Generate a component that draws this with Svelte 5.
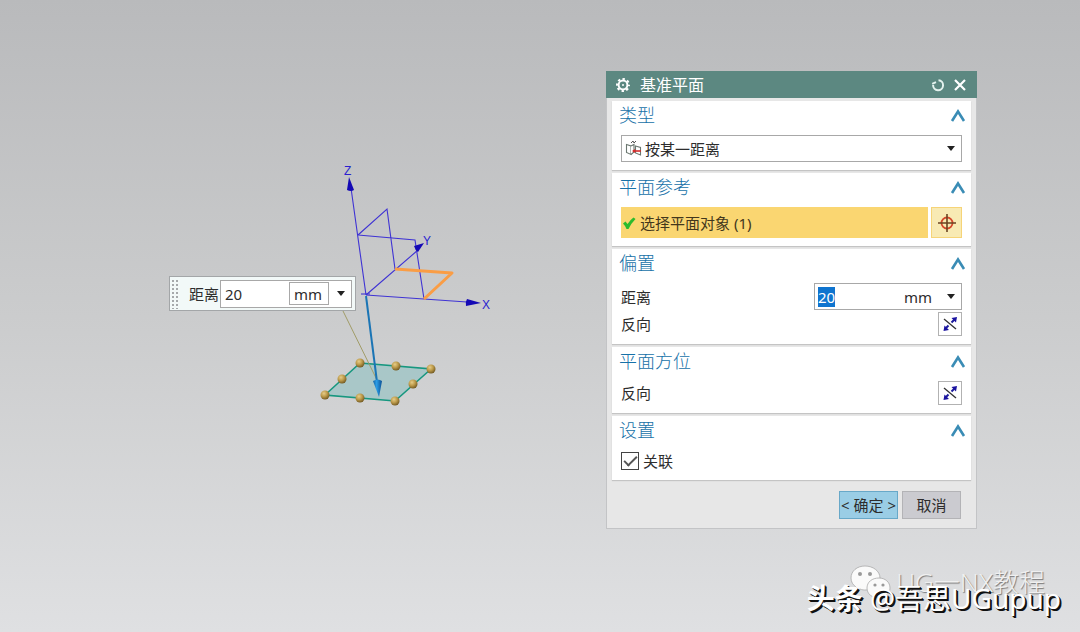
<script lang="ts">
  import { onMount } from 'svelte';

  let planeType = $state('distance');
  let distance = $state('20');
  let unit = $state('mm');
  let associative = $state(true);
  let distanceInput: HTMLInputElement;

  const handles = [
    [360, 363], [396, 366], [431, 369], [413, 384],
    [395, 401], [360, 398], [325, 395], [342, 379]
  ];

  onMount(() => {
    distanceInput.focus();
    distanceInput.select();
  });
</script>

{#snippet arrow()}
  <svg class="arrow" viewBox="0 0 8 5" aria-hidden="true"><path d="M0 0h8L4 5z" fill="#222" /></svg>
{/snippet}

{#snippet heading(title: string)}
  <header class="heading">
    <h2>{title}</h2>
    <button class="collapse" aria-label="折叠{title}">
      <svg width="16" height="13" viewBox="0 0 16 13"><path d="M2 12L8 2.5L14 12" fill="none" stroke="#3a8cb5" stroke-width="2.6" /></svg>
    </button>
  </header>
{/snippet}

{#snippet reverseButton()}
  <button class="reverse" aria-label="反向">
    <svg width="16" height="16" viewBox="0 0 16 16">
      <path d="M2 3L14 13" stroke="#333" stroke-width="1.3" />
      <path d="M3.5 12.5L6.5 9.5M9.5 6.5L12.5 3.5" stroke="#1c1c9c" stroke-width="2" />
      <path d="M15 1L14 6.5L9.5 2z M1.5 15L2.5 9.5L7 14z" fill="#1a12a0" />
    </svg>
  </button>
{/snippet}

<main class="workspace">
  <svg class="scene" width="1080" height="632" viewBox="0 0 1080 632" aria-hidden="true">
    <defs>
      <radialGradient id="ball" cx="38%" cy="32%" r="70%">
        <stop offset="0" stop-color="#e6cc88" />
        <stop offset="0.5" stop-color="#bd9b4b" />
        <stop offset="1" stop-color="#735a22" />
      </radialGradient>
      <linearGradient id="cone">
        <stop offset="0" stop-color="#1463a5" />
        <stop offset="0.4" stop-color="#2b9de6" />
        <stop offset="1" stop-color="#0b4f93" />
      </linearGradient>
    </defs>

    <path d="M360 363L431 369L395 401L325 395z" fill="#a4c5c6" fill-opacity="0.9" stroke="#16977f" stroke-width="1.6" />
    <path d="M343 311L377 380" stroke="#a19c68" stroke-width="1" />

    <g fill="none" stroke="#3f33d4" stroke-width="1.1">
      <path d="M366 295L351 188M366 295L467 302M366 295L418 250" />
      <path d="M358 235L387 209L395 269M358 235L415 240L424 299" />
      <path d="M361 294h9" />
    </g>
    <g fill="#1409b5">
      <path d="M349 177L347 190Q351 192 354 190z" />
      <path d="M481 303L467 299Q465 302 466 306z" />
      <path d="M424 243L414 246Q415 250 418 252z" />
    </g>
    <path d="M395 269L452 273L424 299" fill="none" stroke="#fa9d45" stroke-width="3" stroke-linejoin="round" />
    <g class="axis">
      <text x="344" y="175">Z</text>
      <text x="423" y="245">Y</text>
      <text x="482" y="309">X</text>
    </g>

    <path d="M366 296L377 382" stroke="#1b75b5" stroke-width="2" />
    <path d="M373 381Q378 378 382 381L379 397z" fill="url(#cone)" />
    {#each handles as [x, y]}
      <circle cx={x} cy={y} r="4.5" fill="url(#ball)" />
    {/each}
  </svg>

  <form class="quick">
    <svg class="grip" width="10" height="30" aria-hidden="true">
      <path d="M2 1V30M6 1V30" stroke="#a5a9ab" stroke-width="2" stroke-dasharray="2 2" />
    </svg>
    <label for="quick-distance">距离</label>
    <div class="quick-field">
      <input id="quick-distance" type="text" bind:value={distance} />
      <select class="quick-unit" aria-label="单位" bind:value={unit}>
        <option value="mm">mm</option>
      </select>
      <span class="quick-arrow">{@render arrow()}</span>
    </div>
  </form>

  <section class="dialog" aria-label="基准平面">
    <header class="titlebar">
      <svg width="16" height="16" viewBox="0 0 16 16" aria-hidden="true">
        <g fill="none" stroke="#fff">
          <circle cx="8" cy="8" r="6" stroke-width="2" stroke-dasharray="2.4 2.31" stroke-dashoffset="1.2" />
          <circle cx="8" cy="8" r="4.4" stroke-width="2" />
        </g>
        <circle cx="8" cy="8" r="1" fill="#fff" />
      </svg>
      <h1>基准平面</h1>
      <button aria-label="重置">
        <svg width="14" height="14" viewBox="0 0 14 14"><path d="M7.5 2.2A5 5 0 1 1 2.1 7M1.2 5.8L5 4.2" fill="none" stroke="#e4f2ee" stroke-width="2" /></svg>
      </button>
      <button aria-label="关闭">
        <svg width="14" height="14" viewBox="0 0 14 14"><path d="M2 2L12 12M12 2L2 12" stroke="#fff" stroke-width="2.2" /></svg>
      </button>
    </header>

    <div class="groups">
      <section class="group">
        {@render heading('类型')}
        <div class="combo">
          <svg width="18" height="17" viewBox="0 0 18 17" aria-hidden="true">
            <g fill="#fff" stroke="#6b7770" stroke-width="1.1">
              <path d="M1.5 4.5L6 6V14.5L1.5 12.5z" />
              <path d="M6 6L9 4.5V12L6 14.5" />
              <path d="M10.5 6L15.5 7.5V15L10.5 13z" />
            </g>
            <path d="M6 3L8 1L9 3L11 1" fill="none" stroke="#555" />
            <path d="M8 11H16" stroke="#d42b2b" stroke-width="1.6" />
            <path d="M10 9V13L7 11z" fill="#d42b2b" />
          </svg>
          <select aria-label="类型" bind:value={planeType}>
            <option value="distance">按某一距离</option>
          </select>
          {@render arrow()}
        </div>
      </section>

      <section class="group">
        {@render heading('平面参考')}
        <div class="pick">
          <button class="pick-object">
            <svg width="14" height="14" viewBox="0 0 14 14" aria-hidden="true"><path d="M1 7.5L3.5 5.5L5.5 8Q8 4 11.5 1.5L13.5 3Q9 7.5 6.5 13H4.5Q3.5 10 1 7.5z" fill="#2dbb2d" /></svg>
            选择平面对象 (1)
          </button>
          <button class="pick-target" aria-label="选择">
            <svg width="20" height="20" viewBox="0 0 20 20">
              <circle cx="10" cy="10" r="5.5" fill="none" stroke="#d5482c" stroke-width="1.8" />
              <path d="M10 1V19M1 10H19" stroke="#6a4322" stroke-width="1.6" />
            </svg>
          </button>
        </div>
      </section>

      <section class="group">
        {@render heading('偏置')}
        <div class="row offset">
          <label for="distance">距离</label>
          <div class="combo measure">
            <input id="distance" type="text" bind:value={distance} bind:this={distanceInput} />
            <select aria-label="单位" bind:value={unit}>
              <option value="mm">mm</option>
            </select>
            {@render arrow()}
          </div>
        </div>
        <div class="row">
          <span>反向</span>
          {@render reverseButton()}
        </div>
      </section>

      <section class="group">
        {@render heading('平面方位')}
        <div class="row">
          <span>反向</span>
          {@render reverseButton()}
        </div>
      </section>

      <section class="group">
        {@render heading('设置')}
        <label class="check">
          <input type="checkbox" bind:checked={associative} />
          关联
        </label>
      </section>
    </div>

    <footer>
      <button class="ok">&lt; 确定 &gt;</button>
      <button class="cancel">取消</button>
    </footer>
  </section>

  <div class="account">
    <svg width="42" height="34" viewBox="0 0 42 34" aria-hidden="true">
      <path d="M15 1C7 1 1 6 1 13c0 4 2 7 5 9l-1 5 5-3c2 1 4 1 6 1 8 0 14-5 14-12S23 1 15 1z" fill="#fafafa" stroke="#aaa" stroke-width="0.8" />
      <path d="M29 13c-7 0-12 4-12 10s5 10 12 10l4-1 4 2-1-4c3-2 4-4 4-7 0-6-5-10-11-10z" fill="#fafafa" stroke="#aaa" stroke-width="0.8" />
      <g fill="#999"><circle cx="10" cy="9" r="2" /><circle cx="20" cy="9" r="2" /><circle cx="25" cy="20" r="1.6" /><circle cx="33" cy="20" r="1.6" /></g>
    </svg>
    <span>UG一NX教程</span>
  </div>
  <div class="byline"><b>头条</b> @吾思UGupup</div>
</main>

<style>
  :global(body) {
    margin: 0;
  }

  .workspace {
    position: relative;
    min-height: 100vh;
    overflow: hidden;
    background: linear-gradient(#b9babc, #cbcccd 50%, #dfe0e2);
    font-family: 'Noto Sans', 'Noto Sans CJK SC', sans-serif;
    font-size: 15px;
    line-height: 20px;
    color: #2d2d2d;
  }

  button,
  input,
  select {
    box-sizing: border-box;
    margin: 0;
    padding: 0;
    border: 0;
    border-radius: 0;
    outline: none;
    background: none;
    font: inherit;
    color: inherit;
    appearance: none;
  }

  svg {
    display: block;
    flex: none;
  }

  h1,
  h2 {
    margin: 0;
    font-weight: 400;
  }

  .scene {
    position: absolute;
    top: 0;
    left: 0;
  }

  .axis {
    font-family: 'Liberation Sans', sans-serif;
    font-size: 12px;
    fill: #2a1fd0;
  }

  .arrow {
    width: 8px;
    height: 5px;
  }

  /* Floating input next to the axes */
  .quick {
    position: absolute;
    top: 276px;
    left: 169px;
    box-sizing: border-box;
    width: 187px;
    height: 35px;
    display: flex;
    align-items: center;
    padding: 0 3px 0 1px;
    border: 1px solid #a3a6a8;
    background: #f2f9f8;
  }

  .quick label {
    flex: none;
    margin-left: 8px;
  }

  .quick-field {
    flex: 1;
    min-width: 0;
    display: flex;
    align-items: center;
    height: 26px;
    margin-left: 1px;
    border: 1px solid #a8a8a8;
    background: #fff;
  }

  .quick-field input {
    flex: 1;
    min-width: 0;
    padding-left: 4px;
  }

  .quick-unit {
    width: 40px;
    height: 23px;
    padding-left: 4px;
    border: 1px solid #a8a8a8;
  }

  .quick-arrow {
    padding: 0 6px 0 8px;
  }

  .dialog {
    position: absolute;
    top: 71px;
    left: 606px;
    box-sizing: border-box;
    width: 371px;
    border: 1px solid #c3c4c6;
    border-top: 0;
    background: #e7e7e7;
  }

  .titlebar {
    display: flex;
    align-items: center;
    gap: 8px;
    height: 27px;
    margin: 0 -1px;
    padding: 0 10px 0 9px;
    background: #5c8881;
    color: #fff;
  }

  .titlebar h1 {
    flex: 1;
    margin-left: 1px;
    font-size: 16px;
  }

  .groups {
    display: grid;
    gap: 3px;
    padding: 3px 5px 0;
  }

  .group {
    padding: 0 9px 8px;
    background: #fff;
    box-shadow: 0 1px 1px #c4c4c4;
  }

  .heading {
    display: flex;
    justify-content: space-between;
    height: 34px;
    margin: 0 -4px 0 -2px;
  }

  .heading h2 {
    font-size: 18px;
    line-height: 28px;
    font-weight: 300;
    color: #1671a8;
  }

  .collapse {
    height: 28px;
  }

  .combo {
    box-sizing: border-box;
    display: flex;
    align-items: center;
    height: 27px;
    padding: 0 6px 0 3px;
    border: 1px solid #a8a8a8;
    background: #fff;
  }

  .combo select {
    flex: 1;
    margin-left: 2px;
  }

  .pick {
    display: flex;
    gap: 3px;
    height: 31px;
  }

  .pick-object {
    flex: 1;
    display: flex;
    align-items: center;
    gap: 4px;
    padding-left: 1px;
    background: #fad671;
    color: #43371c;
  }

  .pick-target {
    display: grid;
    place-items: center;
    width: 31px;
    border: 1px solid #f6d478;
    background: #f8eab4;
  }

  .row {
    display: flex;
    align-items: center;
    justify-content: space-between;
  }

  .offset {
    margin-bottom: 2px;
  }

  .measure {
    width: 148px;
  }

  .measure input {
    flex: none;
    width: 84px;
  }

  .measure input::selection {
    background: #0f74cf;
    color: #fff;
  }

  .reverse {
    display: grid;
    place-items: center;
    width: 24px;
    height: 24px;
    border: 1px solid #b2b2b2;
    background: #fff;
  }

  .check {
    display: flex;
    align-items: center;
    gap: 4px;
    height: 22px;
  }

  .check input {
    display: grid;
    place-items: center;
    width: 18px;
    height: 18px;
    border: 1px solid #444;
  }

  .check input:checked::before {
    content: '';
    width: 13px;
    height: 7px;
    margin-bottom: 4px;
    border: solid #555;
    border-width: 0 0 2px 2px;
    box-sizing: border-box;
    transform: rotate(-45deg);
  }

  footer {
    display: flex;
    justify-content: flex-end;
    gap: 4px;
    padding: 11px 15px 9px;
  }

  footer button {
    width: 59px;
    height: 28px;
    border: 1px solid #b3b3b6;
    background: #cbcbd0;
    white-space: nowrap;
  }

  footer .ok {
    border-color: #68a8c8;
    background: #9acde5;
  }

  /* Overlaid credits */
  .account {
    position: absolute;
    right: 35px;
    bottom: 33px;
    display: flex;
    align-items: center;
    gap: 4px;
    font-size: 26px;
    line-height: 34px;
    font-weight: 300;
    color: #f0f0f0;
    text-shadow: 1px 1px 1px #777;
    white-space: nowrap;
  }

  .byline {
    position: absolute;
    right: 19px;
    bottom: 16px;
    font-size: 28px;
    line-height: 36px;
    color: #fff;
    text-shadow: 1px 1px 0 #111, 2px 2px 0 #111;
    white-space: nowrap;
  }
</style>
